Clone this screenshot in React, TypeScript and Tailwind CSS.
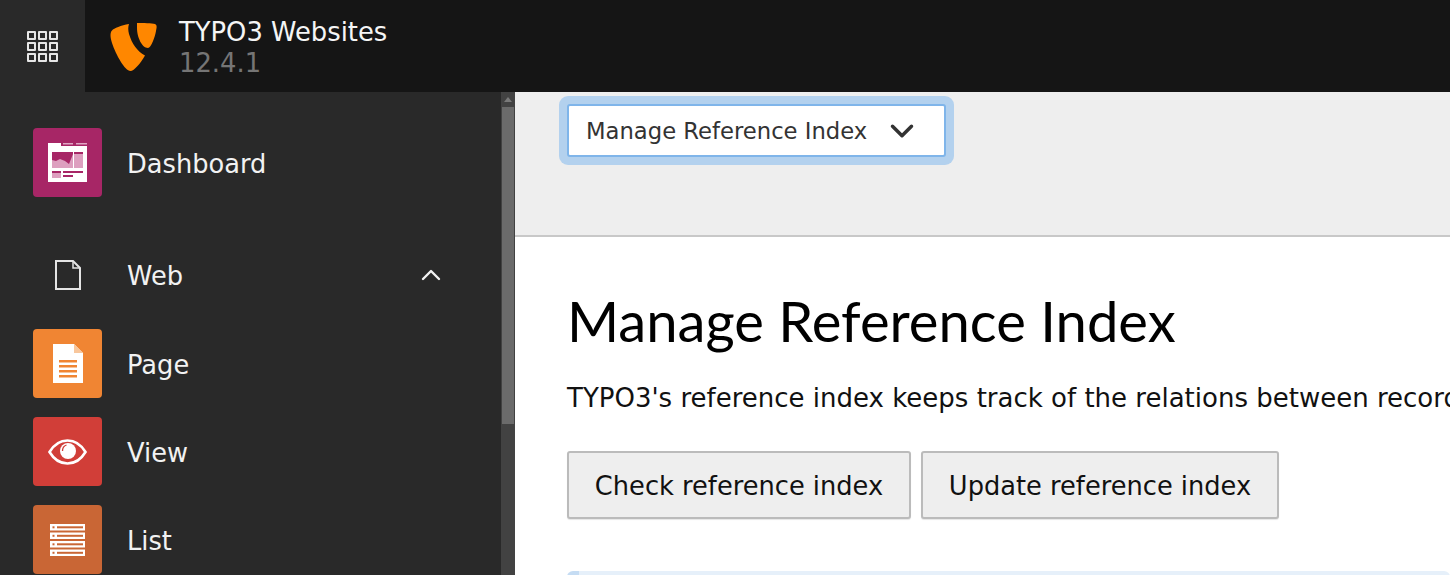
import { ChevronDown, ChevronUp } from "lucide-react";
import type { ReactNode } from "react";

const sans = "font-['DejaVu_Sans',sans-serif]";

function GridIcon() {
  const cells = [0, 1, 2, 3, 4, 5, 6, 7, 8];
  return (
    <div className="grid grid-cols-3 gap-[2px] w-[31px]">
      {cells.map((c) => (
        <div key={c} className="w-[9px] h-[9px] border-2 border-[#e6e6e6] rounded-[1px]" />
      ))}
    </div>
  );
}

function Typo3Logo() {
  return (
    <svg width="47" height="49" viewBox="0 0 47 49" fill="#ff8700">
      <path d="M19 2C11 3.5 4 6 2 8.5C0 10.5 0 15 2 21C6 33 15 49 20.5 49C24 49 31 41 35 33.5C27 29 22 22 19 12C18 8 18 5 19 2Z" />
      <path d="M27 1C33 1 42 1 45 2C47 3 47 5 46 9C45 15 41 26 38 26C32 26 27 15 27 6Z" />
    </svg>
  );
}

function DashboardIcon() {
  return (
    <svg width="39" height="39" viewBox="0 0 39 39">
      <path d="M0 0H13V3H39V39H0Z" fill="#fff" />
      <rect x="15" y="0" width="10" height="1.5" fill="#e0a6c4" />
      <rect x="28" y="0" width="11" height="1.5" fill="#e0a6c4" />
      <rect x="4" y="9" width="21" height="16" fill="#dd9fbf" />
      <path d="M4 9H25V11L21 21L17 18L12 16L8 18L4 17Z" fill="#a72666" />
      <rect x="26" y="9" width="9" height="16" fill="#dd9fbf" />
      <rect x="26" y="9" width="9" height="2" fill="#a72666" />
      <rect x="4" y="28" width="9" height="7" fill="#dd9fbf" />
      <rect x="4" y="28" width="9" height="2" fill="#a72666" />
      <rect x="15" y="28" width="20" height="2" fill="#a72666" />
      <rect x="15" y="32" width="10" height="2" fill="#a72666" />
    </svg>
  );
}

function WebIcon() {
  return (
    <svg width="26" height="30" viewBox="0 0 26 30" fill="none" stroke="#e4e4e4" strokeWidth="2">
      <path d="M1 1H18L25 8V29H1Z" />
      <path d="M18 1V8H25" strokeWidth="1.5" />
    </svg>
  );
}

function PageIcon() {
  return (
    <svg width="30" height="39" viewBox="0 0 30 39">
      <path d="M0 0H21L30 9V39H0Z" fill="#fff" />
      <path d="M21 0L30 9H21Z" fill="#f8c79d" />
      <rect x="6" y="16" width="18" height="2.5" fill="#f08533" />
      <rect x="6" y="21" width="18" height="2.5" fill="#f08533" />
      <rect x="6" y="26" width="18" height="2.5" fill="#f08533" />
      <rect x="6" y="31" width="18" height="2.5" fill="#f08533" />
    </svg>
  );
}

function EyeIcon() {
  return (
    <svg width="39" height="26" viewBox="0 0 39 26">
      <path d="M1.5 13C6 5.5 12 1.5 19.5 1.5C27 1.5 33 5.5 37.5 13C33 20.5 27 24.5 19.5 24.5C12 24.5 6 20.5 1.5 13Z" fill="none" stroke="#fff" strokeWidth="2.6" />
      <circle cx="20" cy="12" r="8" fill="#fff" />
      <path d="M14.5 12C14.5 9 16 6.8 18.5 6" fill="none" stroke="#d13e38" strokeWidth="1.3" />
    </svg>
  );
}

function ListIcon() {
  const rows = [0, 8.5, 17, 25.5];
  return (
    <svg width="35" height="32" viewBox="0 0 35 32">
      {rows.map((y) => (
        <g key={y}>
          <rect x="0" y={y} width="35" height="6.5" fill="#fff" />
          <rect x="7" y={y + 2.3} width="26" height="2" fill="#c96635" />
          <rect x="2.5" y={y + 2.3} width="2" height="2" fill="#c96635" />
        </g>
      ))}
    </svg>
  );
}

function ModuleRow({ color, label, icon }: { color: string; label: string; icon: ReactNode }) {
  return (
    <div className="flex items-center h-[69px]">
      <div className={`w-[69px] h-[69px] rounded-[4px] flex items-center justify-center ${color}`}>{icon}</div>
      <span className="ml-[25px] mt-[3px] text-[25.7px] text-[#f2f2f2]">{label}</span>
    </div>
  );
}

export default function App() {
  return (
    <div className={`h-screen flex flex-col overflow-hidden bg-white ${sans}`}>
      {/* top bar */}
      <header className="h-[92px] shrink-0 flex bg-[#151515]">
        <div className="w-[85px] flex items-center justify-center bg-[#292929]">
          <GridIcon />
        </div>
        <div className="ml-[25px] flex items-center">
          <Typo3Logo />
          <div className="ml-[22px] flex flex-col pt-[3px]">
            <span className="text-[25.8px] leading-[31px] text-[#f5f5f5]">TYPO3 Websites</span>
            <span className="text-[25.8px] leading-[31px] text-[#757575]">12.4.1</span>
          </div>
        </div>
      </header>

      <div className="flex flex-1 min-h-0">
        {/* sidebar */}
        <aside className="w-[515px] shrink-0 flex bg-[#292929]">
          <div className="w-[486px] shrink-0 pl-[33px] pt-[36px]">
            <ModuleRow color="bg-[#a72666]" label="Dashboard" icon={<DashboardIcon />} />
            <div className="mt-[43px] h-[69px] flex items-center">
              <div className="w-[69px] flex justify-center">
                <WebIcon />
              </div>
              <span className="ml-[25px] mt-[3px] text-[25.7px] text-[#f2f2f2]">Web</span>
              <ChevronUp className="ml-auto mr-[39px] text-[#f2f2f2]" size={32} strokeWidth={1.8} />
            </div>
            <div className="flex flex-col gap-[19px] mt-[20px]">
              <ModuleRow color="bg-[#f08533]" label="Page" icon={<PageIcon />} />
              <ModuleRow color="bg-[#d13e38]" label="View" icon={<EyeIcon />} />
              <ModuleRow color="bg-[#c96635]" label="List" icon={<ListIcon />} />
            </div>
          </div>
          {/* scrollbar */}
          <div className="ml-auto w-[14px] shrink-0 bg-[#424242] flex flex-col items-center">
            <div className="h-[15px] flex items-center justify-center">
              <div className="w-0 h-0 border-x-[4px] border-x-transparent border-b-[5px] border-b-[#7a7a7a]" />
            </div>
            <div className="w-[12px] h-[317px] bg-[#6b6b6b]" />
          </div>
        </aside>

        {/* main */}
        <main className="flex-1 min-w-0 overflow-hidden flex flex-col">
          <div className="h-[145px] shrink-0 bg-[#eeeeee] border-b-2 border-[#c8c8c8] pl-[52px] pt-[12px]">
            <div className="w-[379px] h-[53px] flex items-center justify-between pl-[17px] pr-[23px] bg-white border-2 border-[#7fb5ea] rounded-[3px] ring-[8px] ring-[#b3d1ee]">
              <span className="mt-[1px] text-[22.7px] text-[#333333] whitespace-nowrap">Manage Reference Index</span>
              <ChevronDown className="text-[#333333] shrink-0" size={38} strokeWidth={2.2} />
            </div>
          </div>
          <div className="pl-[52px]">
            <h1 className="mt-[46px] text-[56.2px] leading-[76px] text-[#000000] whitespace-nowrap font-['Lato',sans-serif]">
              Manage Reference Index
            </h1>
            <p className="mt-[23px] text-[26px] leading-[32px] text-[#111111] whitespace-nowrap">
              TYPO3's reference index keeps track of the relations between records. Check or update it here.
            </p>
            <div className="mt-[37px] flex gap-[10px]">
              <button className="w-[344px] h-[68px] pt-[2px] text-[25.7px] text-[#111111] bg-[#eeeeee] border-2 border-[#bbbbbb] rounded-[3px] shadow-[0_1px_1px_rgba(0,0,0,0.1)]">
                Check reference index
              </button>
              <button className="w-[358px] h-[68px] pt-[2px] text-[25.7px] text-[#111111] bg-[#eeeeee] border-2 border-[#bbbbbb] rounded-[3px] shadow-[0_1px_1px_rgba(0,0,0,0.1)]">
                Update reference index
              </button>
            </div>
            <div className="mt-[52px] h-[40px] bg-[#e6f0fa] border-l-[12px] border-[#c5dcf3] rounded-[6px]" />
          </div>
        </main>
      </div>
    </div>
  );
}
